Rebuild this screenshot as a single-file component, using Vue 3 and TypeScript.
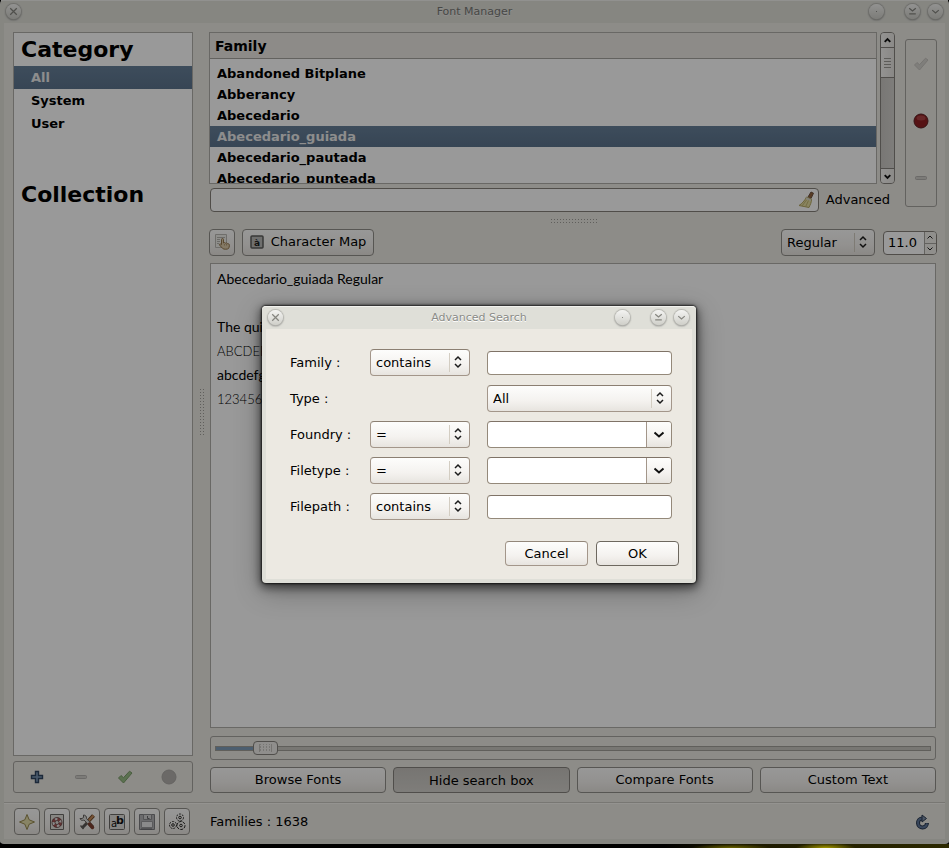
<script setup lang="ts">
import { computed, ref } from 'vue'

const categories = ['All', 'System', 'User']
const category = ref('All')

const families = [
  'Abandoned Bitplane',
  'Abberancy',
  'Abecedario',
  'Abecedario_guiada',
  'Abecedario_pautada',
  'Abecedario_punteada',
]
const family = ref('Abecedario_guiada')

const actions = ['Browse Fonts', 'Hide search box', 'Compare Fonts', 'Custom Text']
const pressed = ref('Hide search box')

const position = ref(53)
const fill = computed(() => `${position.value / 10 + 1}%`)
const style = ref('Regular')
const size = ref('11.0')
const query = ref('')

type Row = { id: string; label: string; op?: string; kind: 'text' | 'select' | 'combo' }
const rows: Row[] = [
  { id: 'family', label: 'Family :', op: 'contains', kind: 'text' },
  { id: 'type', label: 'Type :', kind: 'select' },
  { id: 'foundry', label: 'Foundry :', op: '=', kind: 'combo' },
  { id: 'filetype', label: 'Filetype :', op: '=', kind: 'combo' },
  { id: 'filepath', label: 'Filepath :', op: 'contains', kind: 'text' },
]
const windowButtons = [
  { name: 'Keep above', d: 'M7.500 8h1' },
  { name: 'Minimize', d: 'M4.500 4.500l3.500 3 3.500-3M4.500 10.500h7' },
  { name: 'Shade', d: 'M4.500 6.500l3.500 3 3.500-3' },
]
</script>

<template>
  <div class="desktop">
    <main class="window">
      <header class="titlebar">
        <button class="round" aria-label="Close window">
          <svg viewBox="0 0 16 16"><path d="M4.500 4.500l7 7M11.500 4.500l-7 7" /></svg>
        </button>
        <h1>Font Manager</h1>
        <div class="round-set">
          <button v-for="b in windowButtons" :key="b.name" class="round" :aria-label="b.name">
            <svg viewBox="0 0 16 16"><path :d="b.d" /></svg>
          </button>
        </div>
      </header>

      <div class="content">
        <aside class="side">
          <nav class="side-list">
            <h2>Category</h2>
            <button
              v-for="c in categories"
              :key="c"
              class="side-item"
              :class="{ selected: c === category }"
              @click="category = c"
            >{{ c }}</button>
            <h2 class="second">Collection</h2>
          </nav>
          <div class="side-tools">
            <button aria-label="Add">
              <svg viewBox="0 0 16 16"><path d="M6.500 2.500h3v4h4v3h-4v4h-3v-4h-4v-3h4z" fill="#7d97b5" stroke="#2f4560" stroke-width="1.400" /></svg>
            </button>
            <button aria-label="Remove">
              <svg viewBox="0 0 16 16"><rect x="2.500" y="6.500" width="11" height="3" rx="1" fill="#cfcdc8" stroke="#b3b1ad" /></svg>
            </button>
            <button aria-label="Enable">
              <svg viewBox="0 0 16 16"><path d="M1.500 9l2.500-2.500 2.500 2.200 6-6.500 2.500 1.800-8.500 10z" fill="#98bd86" stroke="#7a9c69" /></svg>
            </button>
            <button aria-label="Disable">
              <svg viewBox="0 0 16 16"><circle cx="8" cy="8" r="7" fill="#b2b0ac" stroke="#a8a6a2" /></svg>
            </button>
          </div>
        </aside>

        <div class="grip vertical"></div>

        <section class="right">
          <div class="top">
            <div class="browser">
              <div class="list-row">
                <div class="list">
                  <div class="list-head">Family</div>
                  <div class="list-body">
                    <button
                      v-for="f in families"
                      :key="f"
                      class="list-item"
                      :class="{ selected: f === family }"
                      @click="family = f"
                    >{{ f }}</button>
                  </div>
                </div>
                <div class="scroll">
                  <button aria-label="Scroll up"><svg viewBox="0 0 14 14"><path d="M4 8.500l3-3 3 3" /></svg></button>
                  <div class="thumb"><i></i><i></i><i></i><i></i></div>
                  <div class="trough"></div>
                  <button aria-label="Scroll down"><svg viewBox="0 0 14 14"><path d="M4 5.500l3 3 3-3" /></svg></button>
                </div>
              </div>
              <div class="search-row">
                <div class="entry search">
                  <input v-model="query" type="text" aria-label="Search" />
                  <button aria-label="Clear">
                    <svg viewBox="0 0 18 18">
                      <path d="M11 6l3-5 2.500 1.200L14 7.500z" fill="#94653f" stroke="#6f5340" />
                      <path d="M9.500 6l5 2.200c.2 3-1.500 6-2.500 8.300L2 14.500c3-2 5.500-4.500 7.500-8.500z" fill="#e6dea0" stroke="#b3a765" />
                      <path d="M5 15l4.500-6M8.500 16l3-6.500" fill="none" stroke="#c2b673" />
                      <path d="M9 7l5 2.400" stroke="#d9d6cf" stroke-width="1.500" />
                    </svg>
                  </button>
                </div>
                <button class="advanced">Advanced</button>
              </div>
            </div>
            <div class="state">
              <button aria-label="Enable family">
                <svg viewBox="0 0 16 16"><path d="M1.500 9l2.500-2.500 2.500 2.200 6-6.500 2.500 1.800-8.500 10z" fill="#d4d2cd" stroke="#c5c3be" /></svg>
              </button>
              <button aria-label="Disable family">
                <svg viewBox="0 0 16 16">
                  <circle cx="8" cy="8" r="7" fill="#8f1f22" stroke="#5b2022" />
                  <ellipse cx="8" cy="5" rx="4.500" ry="2.500" fill="#c0585a" opacity=".6" />
                </svg>
              </button>
              <button aria-label="Remove family">
                <svg viewBox="0 0 16 16"><rect x="2.500" y="6.500" width="11" height="3" rx="1" fill="#cfcdc8" stroke="#b3b1ad" /></svg>
              </button>
            </div>
          </div>

          <div class="grip horizontal"></div>

          <div class="toolbar">
            <button class="btn icon-btn" aria-label="Select fonts">
              <svg viewBox="0 0 18 18">
                <path d="M2.500 1.500h11v13h-11z" fill="#efeeea" stroke="#b9b7b2" />
                <path d="M4 4.500h8M4 6.500h3M4 8.500h3M4 10.500h2" stroke="#b5b3ae" />
                <path d="M8.500 6.500c0-1.300 2-1.300 2 0v3.500l1-.5 1 .7 1.200-.4.8.9 1.300.2c1 .5.600 3-.2 4.500-.5 1-5 1.200-6 0L6.500 12c-.5-1.200 1-1.500 2-.3z" fill="#dccaa8" stroke="#94784f" />
                <path d="M11.500 11v1.500M13.500 11v1.500" stroke="#b39a73" />
              </svg>
            </button>
            <button class="btn map">
              <svg viewBox="0 0 14 14">
                <rect x="1" y="1" width="12" height="12" rx="1" fill="#b9b9b7" stroke="#5e5e5c" stroke-width="1.500" />
                <text x="7" y="11" text-anchor="middle" font-size="9" font-weight="bold" fill="#222">à</text>
              </svg>
              <span>Character Map</span>
            </button>
            <div class="select style-select">
              <select v-model="style" aria-label="Font style"><option>Regular</option></select>
              <svg viewBox="0 0 10 16"><path d="M2 6l3-3 3 3M2 10l3 3 3-3" /></svg>
            </div>
            <div class="entry spin">
              <input v-model="size" type="text" aria-label="Font size" />
              <div class="steps">
                <button aria-label="Larger"><svg viewBox="0 0 10 10"><path d="M2.500 6.500l2.500-2.500 2.500 2.500" /></svg></button>
                <button aria-label="Smaller"><svg viewBox="0 0 10 10"><path d="M2.500 3.500l2.500 2.500 2.500-2.500" /></svg></button>
              </div>
            </div>
          </div>

          <div class="preview">
            <p>Abecedario_guiada Regular</p>
            <p></p>
            <p>The quic</p>
            <p class="small">ABCDEFG</p>
            <p>abcdefgh</p>
            <p class="small">123456</p>
          </div>

          <div class="slider" :style="{ '--fill': fill }">
            <input v-model.number="position" type="range" min="0" max="1000" aria-label="Preview size" />
          </div>

          <div class="actions">
            <button
              v-for="a in actions"
              :key="a"
              class="btn"
              :class="{ pressed: a === pressed }"
              @click="pressed = a"
            >{{ a }}</button>
          </div>
        </section>
      </div>

      <footer class="status">
        <div class="status-tools">
          <button class="btn" aria-label="New">
            <svg viewBox="0 0 18 18"><path d="M9 1.500l2.200 5.300 5.300 2.200-5.300 2.200-2.200 5.300-2.200-5.300-5.300-2.200 5.300-2.200z" fill="#e3dca8" stroke="#96884f" /></svg>
          </button>
          <button class="btn" aria-label="Help">
            <svg viewBox="0 0 18 18">
              <path d="M2.500 1.500h13v15h-13z" fill="#e2e0db" stroke="#6c6a67" />
              <circle cx="9" cy="9.500" r="3.500" fill="none" stroke="#e4e4e4" stroke-width="3" />
              <circle cx="9" cy="9.500" r="3.500" fill="none" stroke="#a35252" stroke-width="3" stroke-dasharray="3 2.500" />
              <circle cx="9" cy="9.500" r="5" fill="none" stroke="#5c3a3a" stroke-width=".8" />
              <circle cx="9" cy="9.500" r="2" fill="#e2e0db" stroke="#5c3a3a" stroke-width=".8" />
            </svg>
          </button>
          <button class="btn" aria-label="Preferences">
            <svg viewBox="0 0 18 18">
              <path d="M9 10l-5 5" stroke="#5b5855" stroke-width="3" />
              <path d="M15.500 2.500L8.500 10" stroke="#6b4527" stroke-width="4" />
              <path d="M15.500 2.500L8.500 10" stroke="#c58a5a" stroke-width="2" />
              <path d="M2 5.500c1 2.500 3 2 4 1.500l7.500 8 2-2L8.500 5.500c.3-2-1-3.500-3-3.500v2.500l-1.500 1z" fill="#d9d9d7" stroke="#64625f" />
              <path d="M11.500 11l3 3.500" stroke="#7d4031" stroke-width="3.500" stroke-linecap="round" />
              <path d="M2.500 12.500l3 3.500" stroke="#64625f" stroke-width="1.500" />
            </svg>
          </button>
          <button class="btn" aria-label="Rename">
            <svg viewBox="0 0 18 18">
              <rect x="1.500" y="1.500" width="15" height="15" rx="1" fill="#e0deda" stroke="#6c6a67" />
              <text x="6" y="14" text-anchor="middle" font-size="10" fill="#111">a</text>
              <text x="12" y="11" text-anchor="middle" font-size="11" font-weight="bold" fill="#111">b</text>
            </svg>
          </button>
          <button class="btn" aria-label="Save">
            <svg viewBox="0 0 18 18">
              <path d="M1.500 1.500h15v15h-15z" fill="#b3b3b6" stroke="#7d7d81" />
              <path d="M5.500 1.500h8v5h-8z" fill="#d0d0d2" stroke="#8a8a8e" />
              <path d="M3.500 8.500h11v6h-11z" fill="#e6e6e8" stroke="#98989c" />
              <path d="M9.500 3v2.500h2M3 16h11" fill="none" stroke="#66666a" />
            </svg>
          </button>
          <button class="btn" aria-label="Plugins">
            <svg viewBox="0 0 18 18" fill="none" stroke="#2b2a28">
              <circle cx="12" cy="4.500" r="3.500" stroke-dasharray="2 1" />
              <circle cx="5" cy="12" r="3.500" stroke-dasharray="2 1" />
              <circle cx="13" cy="12.500" r="4" stroke-dasharray="3 1" />
              <circle cx="12" cy="4.500" r="1.300" />
              <circle cx="5" cy="12" r="1.300" />
              <circle cx="13" cy="12.500" r="1.300" />
            </svg>
          </button>
        </div>
        <span class="count">Families : 1638</span>
        <button class="refresh" aria-label="Refresh">
          <svg viewBox="0 0 16 16">
            <path d="M8 4.500a4.500 4.500 0 1 0 5 4.500" fill="none" stroke="#2b3b52" stroke-width="4" />
            <path d="M8 1l4.500 3.500-4.500 3.500z" fill="#7f90a8" stroke="#2b3b52" />
            <path d="M7.500 4.500a4.500 4.500 0 1 0 5.500 5" fill="none" stroke="#60779a" stroke-width="2" />
          </svg>
        </button>
      </footer>
    </main>

    <div class="shade"></div>

    <form class="dialog" role="dialog" aria-labelledby="dialog-title" @submit.prevent>
      <header class="titlebar">
        <button type="button" class="round" aria-label="Close dialog">
          <svg viewBox="0 0 16 16"><path d="M4.500 4.500l7 7M11.500 4.500l-7 7" /></svg>
        </button>
        <h1 id="dialog-title">Advanced Search</h1>
        <div class="round-set">
          <button v-for="b in windowButtons" :key="b.name" type="button" class="round" :aria-label="b.name">
            <svg viewBox="0 0 16 16"><path :d="b.d" /></svg>
          </button>
        </div>
      </header>
      <div class="dialog-body">
        <div class="fields">
          <template v-for="r in rows" :key="r.id">
            <label :for="r.id">{{ r.label }}</label>
            <div v-if="r.op" class="select">
              <select :aria-label="`${r.label} condition`"><option>{{ r.op }}</option></select>
              <svg viewBox="0 0 10 16"><path d="M2 6l3-3 3 3M2 10l3 3 3-3" /></svg>
            </div>
            <span v-else></span>
            <div v-if="r.kind === 'select'" class="select">
              <select :id="r.id"><option>All</option></select>
              <svg viewBox="0 0 10 16"><path d="M2 6l3-3 3 3M2 10l3 3 3-3" /></svg>
            </div>
            <div v-else class="entry" :class="{ combo: r.kind === 'combo' }">
              <input :id="r.id" type="text" />
              <button v-if="r.kind === 'combo'" type="button" :aria-label="`${r.label} choices`">
                <svg viewBox="0 0 14 14"><path d="M2.500 4.500l4.500 4 4.500-4" /></svg>
              </button>
            </div>
          </template>
        </div>
        <div class="dialog-buttons">
          <button type="button" class="btn">Cancel</button>
          <button type="submit" class="btn default">OK</button>
        </div>
      </div>
    </form>
  </div>
</template>

<style>
body {
  background: #000;
}
</style>

<style scoped>
.desktop {
  position: relative;
  display: flex;
  flex-direction: column;
  min-height: 100vh;
  padding-bottom: 4px;
  box-sizing: border-box;
  background:
    radial-gradient(ellipse 30px 5px at 87% 100%, #a59a00, transparent),
    radial-gradient(ellipse 40px 4px at 77% 100%, #6d6600, transparent),
    linear-gradient(90deg, #000 70%, #1c1900 78%, #2c2900) bottom / 100% 4px no-repeat,
    #000;
  font: 13px/16px 'DejaVu Sans', sans-serif;
  color: #000;
}
.desktop * {
  box-sizing: border-box;
}
button,
input,
select {
  margin: 0;
  padding: 0;
  border: 0;
  border-radius: 0;
  background: none;
  font: inherit;
  color: inherit;
  outline: none;
}
h1,
h2,
p {
  margin: 0;
}
svg {
  display: block;
  flex: none;
}
.window {
  flex: 1;
  display: flex;
  flex-direction: column;
  border: solid #dfdfd8;
  border-width: 0 4px 5px;
  border-radius: 4px;
  background: #ece9e3;
}
.titlebar {
  display: grid;
  grid-template-columns: 1fr auto 1fr;
  align-items: center;
  height: 23px;
  padding: 0 1px 2px;
  background: #dfdfd8;
  border-top: 1px solid #f2f2ee;
}
.titlebar h1 {
  margin-top: 2px;
  font-size: 11px;
  font-weight: normal;
  line-height: 14px;
  color: #8a8b87;
  text-shadow: 0 1px #fff;
}
.window .titlebar h1 {
  color: #777874;
  text-shadow: 0 1px #eee;
}
.round {
  width: 15px;
  height: 15px;
  border-radius: 50%;
  background: linear-gradient(#f4f4f2, #cfcfc9);
  box-shadow: 0 0 1px 1px #b8b8b2, 0 1px 2px #777;
}
.window .titlebar {
  margin: 0 -3px;
}
.round svg {
  width: 15px;
  height: 15px;
  fill: none;
  stroke: #85857f;
  stroke-width: 1.300;
}
.titlebar > .round {
  margin-left: 4px;
}
.dialog .titlebar > .round {
  margin-left: 5px;
}
.round-set {
  display: flex;
  justify-content: flex-end;
  gap: 8px;
  padding-right: 4px;
}
.round-set .round:first-child {
  margin-right: 13px;
}
.content {
  flex: 1;
  display: grid;
  grid-template-columns: 180px 16px minmax(0, 1fr);
  padding: 9px 8px 9px 9px;
}
.side {
  display: flex;
  flex-direction: column;
  gap: 5px;
}
.side-list {
  flex: 1;
  border: 1px solid #b0aea9;
  background: #fff;
}
h2 {
  padding: 0 7px;
  font-size: 22px;
  line-height: 33px;
}
h2.second {
  margin-top: 43px;
}
.side-item {
  display: block;
  width: 100%;
  height: 23px;
  padding-left: 17px;
  font-weight: bold;
  text-align: left;
}
.selected {
  background: linear-gradient(#678099, #5c748d);
  color: #ebebeb;
}
.side-tools {
  display: flex;
  align-items: center;
  justify-content: space-around;
  height: 32px;
  padding: 0 1px;
  border: 1px solid #a5a39e;
  border-radius: 3px;
}
.side-tools svg,
.state svg {
  width: 16px;
  height: 16px;
}
.grip {
  background-image:
    linear-gradient(90deg, #ece9e3 2px, transparent 2px),
    linear-gradient(#a19f9a 1px, #ece9e3 1px);
  background-size: 3px 3px;
}
.grip.vertical {
  align-self: center;
  justify-self: center;
  width: 6px;
  height: 48px;
}
.grip.horizontal {
  align-self: center;
  width: 48px;
  height: 6px;
  margin: 7px 0 4px;
}
.right {
  display: flex;
  flex-direction: column;
  min-width: 0;
}
.top {
  display: grid;
  grid-template-columns: minmax(0, 1fr) 32px;
  gap: 10px;
}
.list-row {
  display: flex;
  gap: 3px;
  height: 152px;
}
.list {
  flex: 1;
  display: flex;
  flex-direction: column;
  border: 1px solid #b0aea9;
  background: #fff;
  overflow: hidden;
}
.list-head {
  flex: none;
  height: 26px;
  padding-left: 5px;
  border-bottom: 1px solid #a5a39e;
  background: #ebe8e3;
  font-size: 14px;
  font-weight: bold;
  line-height: 26px;
}
.list-body {
  padding-top: 4px;
}
.list-item {
  display: block;
  width: 100%;
  height: 21px;
  padding-left: 7px;
  font-weight: bold;
  text-align: left;
}
.scroll {
  display: flex;
  flex-direction: column;
  width: 15px;
  border: 1px solid #85837e;
  border-radius: 4px;
  background: linear-gradient(90deg, #c9c7c3, #d3d1cd);
  overflow: hidden;
}
.scroll button {
  height: 14px;
  background: linear-gradient(90deg, #f6f5f3, #e9e7e3);
}
.scroll svg {
  width: 13px;
  height: 13px;
}
.scroll path,
.combo path {
  fill: none;
  stroke: #111;
  stroke-width: 2;
}
.scroll .thumb {
  display: flex;
  flex-direction: column;
  align-items: center;
  justify-content: center;
  gap: 2px;
  height: 31px;
  border: solid #85837e;
  border-width: 1px 0;
  background: linear-gradient(90deg, #f6f5f3, #e5e3df);
}
.thumb i {
  width: 7px;
  height: 1px;
  background: #9b9994;
}
.trough {
  flex: 1;
  border-bottom: 1px solid #85837e;
}
.search-row {
  display: flex;
  align-items: center;
  gap: 7px;
  margin-top: 4px;
  padding: 0 5px 0 1px;
}
.entry {
  display: flex;
  height: 24px;
  border: 1px solid #94897a;
  border-top-color: #7f7367;
  border-radius: 4px;
  background: #fff;
  overflow: hidden;
}
.window .entry {
  border-color: #85817a;
}
.entry input {
  flex: 1;
  width: 0;
  min-width: 0;
  padding: 0 4px;
}
.entry.search {
  flex: 1;
}
.entry.search svg {
  width: 18px;
  height: 18px;
  margin-right: 3px;
}
.state {
  display: flex;
  flex-direction: column;
  align-items: center;
  justify-content: space-between;
  margin: 7px 0 5px;
  padding: 16px 0 20px;
  border: 1px solid #a5a39e;
  border-radius: 3px;
}
.btn {
  display: flex;
  align-items: center;
  justify-content: center;
  border: 1px solid #a3968a;
  border-top-color: #93877a;
  border-radius: 4px;
  background: linear-gradient(#fdfdfc, #f4f2ef 60%, #e7e4df);
}
.window .btn {
  border-color: #918f8a;
}
.btn.default {
  border-color: #6d685f;
}
.toolbar {
  display: flex;
  align-items: center;
  height: 27px;
}
.toolbar .btn {
  height: 27px;
  padding-bottom: 1px;
}
.icon-btn {
  width: 26px;
}
.icon-btn svg {
  width: 18px;
  height: 18px;
}
.map {
  gap: 7px;
  width: 132px;
  margin-left: 7px;
}
.map svg {
  width: 14px;
  height: 14px;
}
.select {
  position: relative;
  height: 27px;
}
.select select {
  width: 100%;
  height: 100%;
  padding: 0 20px 0 5px;
  border: 1px solid #a3968a;
  border-top-color: #8b7f72;
  border-radius: 4px;
  background:
    linear-gradient(#d3cdc2, #d3cdc2) right 19px center / 1px 19px no-repeat,
    linear-gradient(#fdfdfc, #f4f2ef 60%, #e7e4df);
  appearance: none;
}
.window .select select {
  border-color: #918f8a;
}
.select svg {
  position: absolute;
  top: 5px;
  right: 7px;
  width: 10px;
  height: 16px;
  fill: none;
  stroke: #1c1c1c;
  stroke-width: 1.500;
  pointer-events: none;
}
.style-select {
  width: 94px;
  margin-left: auto;
}
.spin {
  width: 54px;
  margin-left: 8px;
}
.steps {
  display: grid;
  grid-template-rows: 1fr 1fr;
  width: 12px;
  border-left: 1px solid #a5a39e;
  background: #f0eeea;
}
.steps button + button {
  border-top: 1px solid #a5a39e;
}
.steps svg {
  width: 10px;
  height: 10px;
  fill: none;
  stroke: #222;
}
.preview {
  flex: 1;
  margin: 7px 1px 8px;
  padding: 3px 6px;
  border: 1px solid #b0aea9;
  background: #fff;
  font-family: Lato, sans-serif;
  font-size: 14px;
}
.preview p {
  min-height: 24px;
  line-height: 24px;
}
.preview .small {
  font-size: 13px;
  font-weight: 300;
}
.slider {
  display: flex;
  align-items: center;
  height: 24px;
  margin: 0 1px;
  padding: 0 4px;
  border: 1px solid #a5a39e;
  border-radius: 3px;
}
.slider input {
  width: 100%;
  height: 14px;
  appearance: none;
}
.slider input::-webkit-slider-runnable-track {
  height: 5px;
  border: 1px solid #a19e98;
  background: linear-gradient(90deg, #7f9db9 var(--fill), #c9c6c0 var(--fill));
}
.slider input::-webkit-slider-thumb {
  width: 25px;
  height: 14px;
  margin-top: -6px;
  border: 1px solid #85837e;
  border-radius: 4px;
  background:
    linear-gradient(90deg, #c3c1bc 1px, transparent 1px 12px, #c3c1bc 12px) center / 13px 12px no-repeat,
    linear-gradient(90deg, #efedea 2px, transparent 2px) center / 3px 3px,
    linear-gradient(#a19f9a 1px, #efedea 1px) center / 3px 3px;
  background-clip: padding-box;
  box-shadow: inset 5px 0 #efedea, inset -5px 0 #efedea, inset 0 2px #efedea, inset 0 -2px #efedea;
  appearance: none;
}
.actions {
  display: grid;
  grid-template-columns: repeat(4, 1fr);
  gap: 7px;
  margin: 7px 1px 0;
}
.actions .btn {
  height: 26px;
}
.window .pressed {
  padding-top: 2px;
  border-color: #85837e;
  background: linear-gradient(#c6c3be, #d3d1cc);
}
.status {
  display: flex;
  align-items: center;
  height: 37px;
  padding: 1px 10px 0;
  border-top: 1px solid #c9c6c0;
  box-shadow: inset 0 1px #f7f5f1;
}
.status-tools {
  display: flex;
  gap: 4px;
}
.status-tools .btn {
  width: 26px;
  height: 27px;
}
.status-tools svg {
  width: 18px;
  height: 18px;
}
.count {
  margin-left: 20px;
}
.refresh {
  margin-left: auto;
  margin-right: 5px;
}
.refresh svg {
  width: 16px;
  height: 16px;
}
.shade {
  position: absolute;
  inset: 0 0 4px;
  background: rgba(0, 0, 0, 0.4);
}
.dialog {
  position: absolute;
  top: 306px;
  left: 262px;
  width: 434px;
  border-radius: 4px;
  background: #dfdfd8;
  box-shadow: 0 0 2px 1px rgba(0, 0, 0, 0.7), 0 3px 10px 2px rgba(0, 0, 0, 0.55), 0 8px 28px rgba(0, 0, 0, 0.3);
}
.dialog .titlebar {
  border-radius: 4px 4px 0 0;
}
.dialog .round-set {
  padding-right: 6px;
}
.dialog-body {
  margin: 0 4px;
  padding: 20px 13px 13px 24px;
  background: #ece9e2;
}
.dialog::after {
  content: '';
  display: block;
  height: 4px;
}
.fields {
  display: grid;
  grid-template-columns: 80px 100px minmax(0, 1fr);
  grid-auto-rows: 27px;
  row-gap: 9px;
  align-items: center;
  padding-right: 7px;
}
.fields > :nth-child(3n) {
  margin-left: 17px;
}
.entry.combo {
  height: 27px;
}
.combo button {
  width: 25px;
  padding-left: 5px;
  border-left: 1px solid #a3968a;
  background: linear-gradient(#fdfdfc, #f4f2ef 60%, #e7e4df);
}
.combo svg {
  width: 14px;
  height: 14px;
}
.dialog-buttons {
  display: flex;
  justify-content: flex-end;
  gap: 8px;
  margin-top: 21px;
}
.dialog-buttons .btn {
  width: 83px;
  height: 25px;
}
</style>
